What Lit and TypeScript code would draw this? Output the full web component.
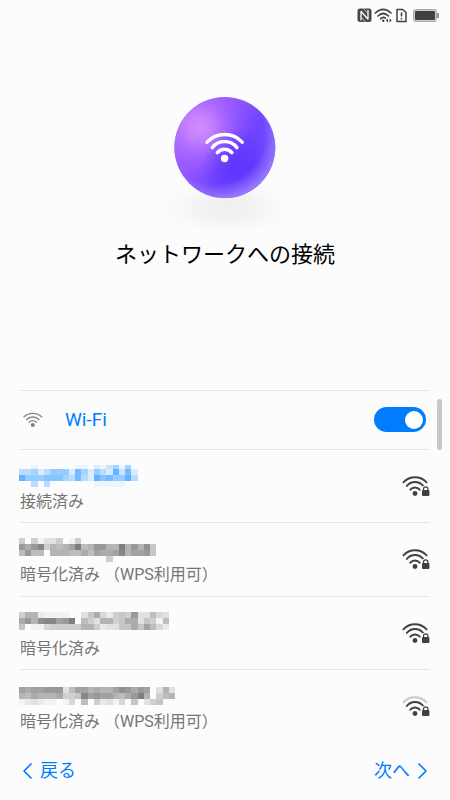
import { LitElement, html, svg, css } from "lit";
import { customElement } from "lit/decorators.js";
import { classMap } from "lit/directives/class-map.js";

interface Network {
  status: string;
  connected: boolean;
  weak: boolean;
  // Top edge of each line of cells.
  tops: number[];
  // One hex digit of darkness per cell of the obscured name, top to bottom.
  mask: string[];
}

const NETWORKS: Network[] = [
  {
    status: "接続済み", connected: true, weak: false,
    tops: [0, 4, 10, 16],
    mask: [
      "0010000001102135150",
      "4452466628526429382",
      "9666777548429786694",
      "0040400000001111100",
    ],
  },
  {
    status: "暗号化済み （WPS利用可）", connected: false, weak: false,
    tops: [0, 6, 12, 18],
    mask: [
      "5051335015000000000000",
      "b9bd5878ae78bb88e8b8c6",
      "7b7708887797a99ad8aab6",
      "0000000000000050000000",
    ],
  },
  {
    status: "暗号化済み", connected: false, weak: false,
    tops: [0, 6, 12],
    mask: [
      "588211110036942565b33743",
      "9b8cddabe075388569936517",
      "60114555558852336696a742",
    ],
  },
  {
    status: "暗号化済み （WPS利用可）", connected: false, weak: true,
    tops: [2, 8, 14],
    mask: [
      "a9aabbb37aa8988acb9ba0383",
      "8798889556dabaa879be80578",
      "1232110140705231406035600",
    ],
  },
];

const CELL = 6.24;

const tone = (digit: string, connected: boolean) => {
  const d = parseInt(digit, 16);
  return connected
    ? `rgb(${252 - d * 17}, ${252 - d * 8}, 255)`
    : `rgb(${252 - d * 9}, ${252 - d * 9}, ${252 - d * 9})`;
};

const mosaic = (n: Network) =>
  n.mask.map((line, r) => {
    const y = n.tops[r];
    const h = (n.tops[r + 1] ?? y + 6) - y;
    return [...line].map((d, c) => {
      const x0 = Math.round(c * CELL);
      const x1 = Math.round((c + 1) * CELL);
      return d === "0"
        ? null
        : svg`<rect x=${x0} y=${y} width=${x1 - x0} height=${h} fill=${tone(d, n.connected)} />`;
    });
  });

@customElement("app-root")
export class AppRoot extends LitElement {
  static styles = css`
    :host {
      display: block;
      font-family: Roboto, "Noto Sans CJK JP", sans-serif;
      color: #000;
      background: #fcfcfc;
    }
    * { box-sizing: border-box; }
    svg { display: block; flex: none; overflow: visible; }
    .page {
      min-height: 100vh;
      display: flex;
      flex-direction: column;
    }
    .status {
      height: 30px;
      padding-right: 11px;
      display: flex;
      justify-content: flex-end;
      align-items: center;
    }
    .hero {
      height: 360px;
      padding-top: 67px;
      display: flex;
      flex-direction: column;
      align-items: center;
    }
    h1 {
      margin: 0;
      font-size: 22px;
      line-height: 36px;
      font-weight: 400;
    }
    .panel {
      position: relative;
      flex: 1;
      padding: 0 20px;
      display: flex;
      flex-direction: column;
    }
    .thumb {
      position: absolute;
      top: 9px;
      right: 8px;
      width: 5px;
      height: 51px;
      border-radius: 3px;
      background: #c8c8c8;
    }
    .wifi {
      height: 59px;
      padding: 0 4px 1px 3px;
      border-top: 1px solid #e6e6e6;
      display: flex;
      align-items: center;
    }
    .wifi label {
      flex: 1;
      padding-left: 22px;
      font-size: 19px;
      line-height: 24px;
      color: #007dff;
    }
    .switch {
      appearance: none;
      margin: 0;
      width: 52px;
      height: 25px;
      padding: 0 3px;
      border-radius: 13px;
      background: #b5b5b5;
      display: flex;
      align-items: center;
    }
    .switch::before {
      content: "";
      width: 18px;
      height: 18px;
      border-radius: 50%;
      background: #fff;
    }
    .switch:checked {
      background: #007dff;
      justify-content: flex-end;
    }
    .list {
      flex: 1;
      margin: 0;
      padding: 0;
      list-style: none;
      display: flex;
      flex-direction: column;
    }
    .item {
      flex: 1;
      border-top: 1px solid #e6e6e6;
      display: flex;
    }
    .network {
      flex: 1;
      padding: 0;
      border: 0;
      background: none;
      font: inherit;
      text-align: left;
      display: flex;
      align-items: center;
      justify-content: space-between;
    }
    .text { padding-top: 7px; }
    .name { margin: 0 0 3px -1px; }
    .state {
      display: block;
      font-size: 16px;
      line-height: 24px;
      color: #757575;
    }
    .footer {
      height: 58px;
      padding: 0 20px 1px;
      display: flex;
      justify-content: space-between;
      align-items: center;
    }
    .nav {
      padding: 0;
      border: 0;
      background: none;
      font: inherit;
      font-size: 18px;
      line-height: 27px;
      color: #007dff;
      display: flex;
      align-items: center;
      gap: 4px;
    }
    .outer { stroke: #404040; }
    .outer.weak { stroke: #c9c9c9; }
  `;

  private statusIcons() {
    return html`
      <svg width="84" height="16" viewBox="0 0 84 16" fill="none" stroke="#404040" aria-hidden="true">
        <rect x="2.500" y="1.500" width="14" height="13.500" rx="2.500" fill="#484848" stroke="none" />
        <path d="M6 13.500V4.200L13 12.200V3" stroke="#fcfcfc" stroke-width="1.300" stroke-linejoin="bevel" />
        <path d="M8.500 1.500 13 6.500M6 10l4.500 5" stroke="#fcfcfc" stroke-width=".7" />
        <path d="M20.300 6Q28.200 -1.400 36 6M23 9Q28.200 4 33.500 9M25.600 11.600Q28.200 9.300 30.400 11.200" stroke-width="1.700" stroke-linecap="round" />
        <circle cx="28.200" cy="13.800" r="1.200" fill="#404040" stroke="none" />
        <path d="M33 11.500 30.800 13.500 33 15.500zM34.500 11.500l2.200 2-2.200 2z" fill="#404040" stroke="none" />
        <path d="M42 2.500h5.800L51 5.500v9H42z" stroke-width="1.500" stroke-linejoin="round" />
        <path d="M46.500 5.500v4M46.500 11v1.600" stroke-width="1.600" />
        <rect x="58.500" y="2.500" width="23" height="12" rx="2" fill="#cfcfcf" stroke="#a8a8a8" />
        <rect x="60" y="4" width="20" height="9" rx="1" fill="#404040" stroke="none" />
        <path d="M83 6v5" stroke="#707070" stroke-width="1.500" />
      </svg>`;
  }

  private ball() {
    return html`
      <svg width="140" height="140" viewBox="0 0 140 140" aria-hidden="true">
        <defs>
          <linearGradient id="base" x1="0.1" y1="0.15" x2="0.9" y2="0.7">
            <stop offset="0" stop-color="#a764ff" />
            <stop offset="0.4" stop-color="#9054ff" />
            <stop offset="0.7" stop-color="#7044ff" />
            <stop offset="1" stop-color="#7450ff" />
          </linearGradient>
          <radialGradient id="glow" cx="0.25" cy="0.3" r="0.48">
            <stop offset="0" stop-color="#d18cff" />
            <stop offset="0.25" stop-color="#cc88ff" stop-opacity="0.85" />
            <stop offset="0.6" stop-color="#b573ff" stop-opacity="0.45" />
            <stop offset="1" stop-color="#9a5cff" stop-opacity="0" />
          </radialGradient>
          <radialGradient id="deep" cx="0.67" cy="0.71" r="0.4">
            <stop offset="0" stop-color="#5f36ff" />
            <stop offset="0.3" stop-color="#5f36ff" stop-opacity="0.85" />
            <stop offset="1" stop-color="#5f36ff" stop-opacity="0" />
          </radialGradient>
          <radialGradient id="rim" cx="0.4" cy="0.37" r="0.68">
            <stop offset="0.72" stop-color="#a78dff" stop-opacity="0" />
            <stop offset="1" stop-color="#a98fff" stop-opacity="0.85" />
          </radialGradient>
          <radialGradient id="shade">
            <stop offset="0" stop-color="#eeeeee" />
            <stop offset="0.4" stop-color="#f2f2f2" />
            <stop offset="0.75" stop-color="#f9f9f9" />
            <stop offset="1" stop-color="#fcfcfc" />
          </radialGradient>
        </defs>
        <ellipse cx="72" cy="111" rx="68" ry="27" fill="url(#shade)" />
        <circle cx="69.800" cy="50.500" r="50.500" fill="url(#base)" />
        <circle cx="69.800" cy="50.500" r="50.500" fill="url(#glow)" />
        <circle cx="69.800" cy="50.500" r="50.500" fill="url(#deep)" />
        <circle cx="69.800" cy="50.500" r="50.500" fill="url(#rim)" />
        <g fill="none" stroke="#fff" stroke-width="3.400" stroke-linecap="round">
          <path d="M52 45.200A24 24 0 0 1 87.200 45.200" />
          <path d="M57.300 50.600A15.500 15.500 0 0 1 81.900 50.600" />
          <path d="M62.300 55.700A9.500 9.500 0 0 1 76.900 55.700" />
        </g>
        <circle cx="69.600" cy="61.500" r="3.700" fill="#fff" />
      </svg>`;
  }

  private signal(weak: boolean) {
    return html`
      <svg width="28" height="22" viewBox="0 0 28 22" fill="none" stroke="#404040" stroke-width="1.900" stroke-linecap="round" aria-hidden="true">
        <path class=${classMap({ outer: true, weak })} d="M1.400 7.300A16 16 0 0 1 24.600 7.300" />
        <path d="M4.800 11A10.500 10.500 0 0 1 21.200 11" />
        <path d="M8.300 14.700A6 6 0 0 1 17.700 14.700" />
        <circle cx="13" cy="18.500" r="2.400" fill="#404040" stroke="none" />
        <path d="M19 13.500l2-2.500h7v10h-9z" fill="#fcfcfc" stroke="none" />
        <rect x="20" y="15" width="7.400" height="6" rx="1" fill="#404040" stroke="none" />
        <path d="M21.500 15.500V14a2.200 2.200 0 0 1 4.400 0V15.500" stroke-width="1.200" />
      </svg>`;
  }

  render() {
    return html`
      <main class="page">
        <div class="status">${this.statusIcons()}</div>
        <header class="hero">
          ${this.ball()}
          <h1>ネットワークへの接続</h1>
        </header>
        <section class="panel">
          <div class="thumb"></div>
          <div class="wifi">
            <svg width="20" height="16" viewBox="0 0 20 16" fill="none" stroke="#808080" stroke-width="1.300" stroke-linecap="round" aria-hidden="true">
              <path d="M1 4.800A13 13 0 0 1 18.600 4.800M3.600 7.500A9 9 0 0 1 16 7.500M6.200 10.200A5.500 5.500 0 0 1 13.400 10.200" />
              <circle cx="9.800" cy="13" r="2" fill="#808080" stroke="none" />
            </svg>
            <label for="wifi">Wi-Fi</label>
            <input class="switch" id="wifi" type="checkbox" role="switch" checked />
          </div>
          <ul class="list">
            ${NETWORKS.map(
              (n) => html`
                <li class="item">
                  <button class="network" type="button">
                    <span class="text">
                      <svg class="name" width="160" height="22" viewBox="0 0 160 22" shape-rendering="crispEdges" aria-hidden="true">
                        ${mosaic(n)}
                      </svg>
                      <span class="state">${n.status}</span>
                    </span>
                    ${this.signal(n.weak)}
                  </button>
                </li>`
            )}
          </ul>
        </section>
        <footer class="footer">
          <button class="nav" type="button">
            <svg width="16" height="18" viewBox="0 0 16 18" fill="none" stroke="#007dff" stroke-width="1.700" stroke-linecap="round" stroke-linejoin="round" aria-hidden="true">
              <path d="M11 2 4 9l7 7" />
            </svg>
            戻る
          </button>
          <button class="nav" type="button">
            次へ
            <svg width="16" height="18" viewBox="0 0 16 18" fill="none" stroke="#007dff" stroke-width="1.700" stroke-linecap="round" stroke-linejoin="round" aria-hidden="true">
              <path d="M5 2l7 7-7 7" />
            </svg>
          </button>
        </footer>
      </main>`;
  }
}
